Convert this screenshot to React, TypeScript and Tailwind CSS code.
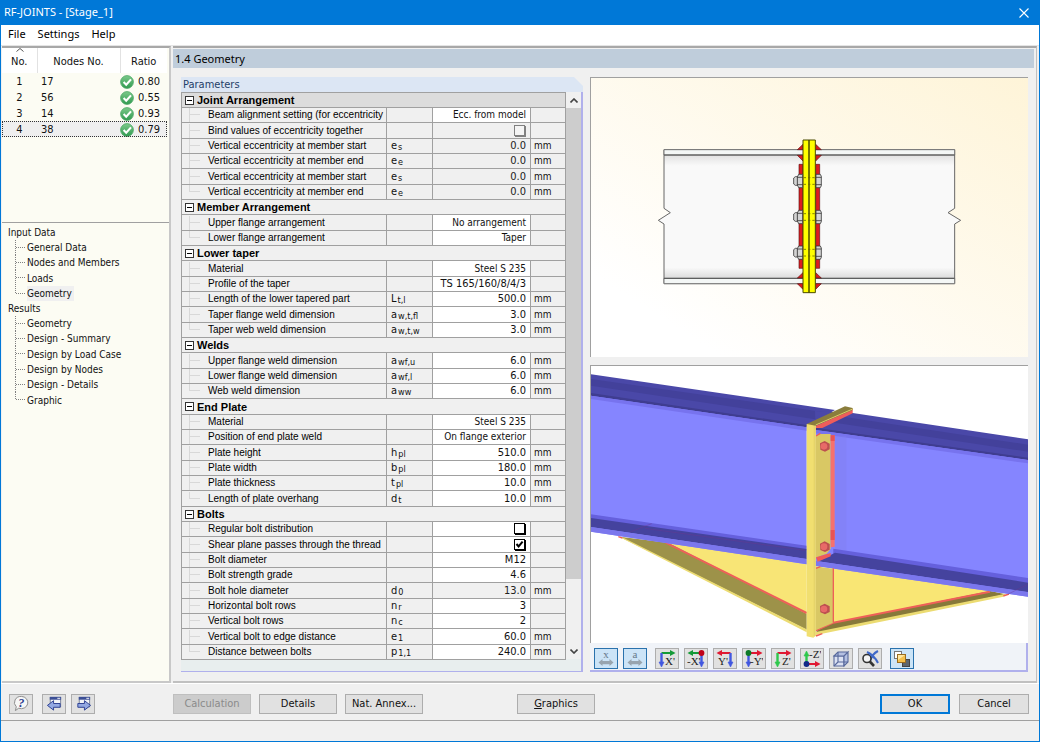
import React, { useState } from "react";

type Row = {
  label: string;
  symbol?: [string, string];
  value?: string;
  check?: boolean;
  unit?: string;
  locked?: boolean;
};
type Group = { title: string; rows: Row[] };

const groups: Group[] = [
  {
    title: "Joint Arrangement",
    rows: [
      { label: "Beam alignment setting (for eccentricity", value: "Ecc. from model" },
      { label: "Bind values of eccentricity together", check: false, locked: true },
      { label: "Vertical eccentricity at member start", symbol: ["e", "s"], value: "0.0", unit: "mm", locked: true },
      { label: "Vertical eccentricity at member end", symbol: ["e", "e"], value: "0.0", unit: "mm", locked: true },
      { label: "Vertical eccentricity at member start", symbol: ["e", "s"], value: "0.0", unit: "mm", locked: true },
      { label: "Vertical eccentricity at member end", symbol: ["e", "e"], value: "0.0", unit: "mm", locked: true },
    ],
  },
  {
    title: "Member Arrangement",
    rows: [
      { label: "Upper flange arrangement", value: "No arrangement" },
      { label: "Lower flange arrangement", value: "Taper" },
    ],
  },
  {
    title: "Lower taper",
    rows: [
      { label: "Material", value: "Steel S 235" },
      { label: "Profile of the taper", value: "TS 165/160/8/4/3" },
      { label: "Length of the lower tapered part", symbol: ["L", "t,l"], value: "500.0", unit: "mm" },
      { label: "Taper flange weld dimension", symbol: ["a", "w,t,fl"], value: "3.0", unit: "mm" },
      { label: "Taper web weld dimension", symbol: ["a", "w,t,w"], value: "3.0", unit: "mm" },
    ],
  },
  {
    title: "Welds",
    rows: [
      { label: "Upper flange weld dimension", symbol: ["a", "wf,u"], value: "6.0", unit: "mm" },
      { label: "Lower flange weld dimension", symbol: ["a", "wf,l"], value: "6.0", unit: "mm" },
      { label: "Web weld dimension", symbol: ["a", "ww"], value: "6.0", unit: "mm" },
    ],
  },
  {
    title: "End Plate",
    rows: [
      { label: "Material", value: "Steel S 235" },
      { label: "Position of end plate weld", value: "On flange exterior" },
      { label: "Plate height", symbol: ["h", "pl"], value: "510.0", unit: "mm" },
      { label: "Plate width", symbol: ["b", "pl"], value: "180.0", unit: "mm" },
      { label: "Plate thickness", symbol: ["t", "pl"], value: "10.0", unit: "mm" },
      { label: "Length of plate overhang", symbol: ["d", "t"], value: "10.0", unit: "mm" },
    ],
  },
  {
    title: "Bolts",
    rows: [
      { label: "Regular bolt distribution", check: false },
      { label: "Shear plane passes through the thread", check: true },
      { label: "Bolt diameter", value: "M12" },
      { label: "Bolt strength grade", value: "4.6" },
      { label: "Bolt hole diameter", symbol: ["d", "0"], value: "13.0", unit: "mm", locked: true },
      { label: "Horizontal bolt rows", symbol: ["n", "r"], value: "3" },
      { label: "Vertical bolt rows", symbol: ["n", "c"], value: "2" },
      { label: "Vertical bolt to edge distance", symbol: ["e", "1"], value: "60.0", unit: "mm" },
      { label: "Distance between bolts", symbol: ["p", "1,1"], value: "240.0", unit: "mm" },
    ],
  },
];

const nodes = [
  ["1", "17", "0.80"],
  ["2", "56", "0.55"],
  ["3", "14", "0.93"],
  ["4", "38", "0.79"],
];

const tree = [
  { title: "Input Data", items: ["General Data", "Nodes and Members", "Loads", "Geometry"], current: 3 },
  {
    title: "Results",
    items: ["Geometry", "Design - Summary", "Design by Load Case", "Design by Nodes", "Design - Details", "Graphic"],
    current: -1,
  },
];

function OkMark() {
  return (
    <svg viewBox="0 0 14 14" className="h-[14px] w-[14px] shrink-0" aria-hidden="true">
      <defs>
        <linearGradient id="ok" x1="0" y1="0" x2="0" y2="1">
          <stop offset="0" stopColor="#7cc98a" />
          <stop offset="1" stopColor="#2f9a50" />
        </linearGradient>
      </defs>
      <circle cx="7" cy="7" r="6.4" fill="url(#ok)" stroke="#4da866" strokeWidth="0.8" />
      <path d="M3.6 7.1 L6.2 9.7 L11 4.4" fill="none" stroke="#fff" strokeWidth="2.1" />
    </svg>
  );
}

function NodeList() {
  return (
    <div className="h-[175px] border-b border-[#a0a0a0] pr-[2px]">
      <table className="w-full table-fixed border-collapse">
        <colgroup>
          <col className="w-[35px]" />
          <col />
          <col className="w-[47px]" />
        </colgroup>
        <thead>
          <tr className="h-[25px] bg-white">
            <th className="relative border-r border-[#e2e2e2] p-0 text-center font-normal">
              <svg viewBox="0 0 8 4" className="absolute left-[14px] top-0 h-1 w-2" aria-hidden="true">
                <path d="M0.5 3.5 L4 0.5 L7.5 3.5" fill="none" stroke="#555" />
              </svg>
              <span className="block pt-[3px]">No.</span>
            </th>
            <th className="border-r border-[#e2e2e2] p-0 pt-[3px] text-center font-normal">Nodes No.</th>
            <th className="p-0 pt-[3px] text-center font-normal">Ratio</th>
          </tr>
        </thead>
        <tbody>
          {nodes.map(([no, node, ratio], i) => (
            <tr
              key={no}
              className={i === 3 ? "h-4 bg-[#efefef] outline-1 -outline-offset-1 outline-dotted outline-[#333]" : "h-4"}
            >
              <td className="p-0 pt-px text-center leading-[15px]">{no}</td>
              <td className="p-0 pl-1 pt-px leading-[15px]">{node}</td>
              <td className="p-0 pt-px leading-[15px]">
                <span className="flex items-center gap-1">
                  <OkMark />
                  {ratio}
                </span>
              </td>
            </tr>
          ))}
        </tbody>
      </table>
    </div>
  );
}

function Branch({ last, dotted }: { last: boolean; dotted?: boolean }) {
  return (
    <svg
      viewBox="0 0 12 16"
      className="h-4 w-3 shrink-0"
      fill="none"
      stroke={dotted ? "#808080" : "#d8d8d8"}
      strokeDasharray={dotted ? "1 1" : undefined}
      aria-hidden="true"
    >
      <path d={last ? "M0.5 0 V8" : "M0.5 0 V16"} />
      <path d="M1 7.5 H11" />
    </svg>
  );
}

function Navigator() {
  return (
    <nav className="flex flex-col pt-[2px] text-[10px]">
      {tree.map((section) => (
        <div key={section.title}>
          <div className="h-[15px] pl-[6px] leading-[15px]">{section.title}</div>
          <ul>
            {section.items.map((item, i) => (
              <li key={item} className="flex h-[15px] items-center overflow-hidden pl-[13px] nth-[3n]:h-4">
                <Branch dotted last={i === section.items.length - 1} />
                <a
                  href="#"
                  className={
                    i === section.current
                      ? "bg-[#f0f0f0] pr-[2px] leading-[15px]"
                      : "leading-[15px]"
                  }
                >
                  {item}
                </a>
              </li>
            ))}
          </ul>
        </div>
      ))}
    </nav>
  );
}

function Check({ label, initial, locked }: { label: string; initial: boolean; locked?: boolean }) {
  const [on, setOn] = useState(initial);
  return (
    <span className="relative ml-auto block h-3 w-3">
      <input
        type="checkbox"
        aria-label={label}
        checked={on}
        disabled={locked}
        onChange={() => setOn(!on)}
        className="block h-[11px] w-[11px] appearance-none border border-black bg-white shadow-[1px_1px_0_#000] disabled:border-[#808080] disabled:bg-[#f4f4f4] disabled:shadow-[1px_1px_0_#808080]"
      />
      {on && (
        <svg viewBox="0 0 11 11" className="pointer-events-none absolute left-0 top-0 h-[11px] w-[11px]" aria-hidden="true">
          <path d="M2.5 5 L4.6 7.5 L8.6 2.6" fill="none" stroke="#000" strokeWidth="2" />
        </svg>
      )}
    </span>
  );
}

const isNumeric = (s?: string) => !!s && /^(TS|M)?[\s\d./]+$/.test(s);

function ParameterTable() {
  let n = 0;
  return (
    <table className="w-full min-w-0 flex-1 table-fixed border-collapse border border-[#a0a0a0] bg-[#f0f0f0] leading-[14px]">
      <colgroup>
        <col />
        <col className="w-[46px]" />
        <col className="w-[98px]" />
        <col className="w-[35px]" />
      </colgroup>
      <tbody>
        {groups.map((g, gi) => {
          n += 1;
          const head = (
            <tr
              key={g.title}
              className={gi === 0 ? "h-[15px] bg-[#dcdcdc]" : n % 3 === 0 ? "h-4" : "h-[15px]"}
            >
              <th colSpan={4} className="border-b border-[#a0a0a0] p-0 text-left font-bold">
                <div className="flex h-[14px] items-center gap-[3px] pl-[3px] font-['Liberation_Sans',sans-serif] leading-[14px] text-black">
                  <button
                    type="button"
                    aria-label={"Collapse " + g.title}
                    className="flex h-[9px] w-[9px] items-center justify-center border border-[#333] bg-white"
                  >
                    <span className="block h-px w-[5px] bg-black" />
                  </button>
                  {g.title}
                </div>
              </th>
            </tr>
          );
          const rows = g.rows.map((r, i) => {
            n += 1;
            return (
              <tr key={g.title + i} className={n % 3 === 0 ? "h-4" : "h-[15px]"}>
                <td className="border-b border-[#a0a0a0] p-0">
                  <div className="flex h-[14px] items-center overflow-hidden whitespace-nowrap pl-[7px]">
                    <Branch last={i === g.rows.length - 1} />
                    <span className="pl-[7px] font-['Liberation_Sans',sans-serif] text-[10px] leading-[14px] text-black">
                      {r.label}
                    </span>
                  </div>
                </td>
                <td className="border-b border-l border-[#a0a0a0] p-0 pl-1">
                  {r.symbol && (
                    <span className="flex h-[14px] gap-px">
                      {r.symbol[0]}
                      <span className="pt-[3px] text-[9px] leading-[11px]">{r.symbol[1]}</span>
                    </span>
                  )}
                </td>
                <td
                  className={
                    r.locked
                      ? "border-b border-l border-[#a0a0a0] p-0 pr-1 text-right text-[#222]"
                      : "border-b border-l border-[#a0a0a0] bg-white p-0 pr-1 text-right"
                  }
                >
                  {r.check !== undefined ? (
                    <Check label={r.label} initial={r.check} locked={r.locked} />
                  ) : (
                    <div className={isNumeric(r.value) ? "h-[14px] whitespace-nowrap" : "h-[14px] whitespace-nowrap text-[10px]"}>
                      {r.value}
                    </div>
                  )}
                </td>
                <td className="border-b border-l border-[#a0a0a0] p-0 pl-[3px] text-[10px]">{r.unit}</td>
              </tr>
            );
          });
          return [head, ...rows];
        })}
      </tbody>
    </table>
  );
}

function Bolt({ y }: { y: number }) {
  return (
    <g stroke="#333" strokeWidth="2.4" fill="#d4d4d4">
      <path d={`M641 ${y - 9} L646 ${y - 13} H653 V${y + 13} H646 L641 ${y + 9} Z`} />
      <path d={`M656 ${y - 20} H668 V${y + 20} H656 L652 ${y + 12} V${y - 12} Z`} />
      <path d={`M708 ${y - 20} H721 L724 ${y - 14} V${y + 14} L721 ${y + 20} H708 Z`} />
      <path d={`M652 ${y - 11} H668 M652 ${y + 11} H668 M708 ${y - 11} H724 M708 ${y + 11} H724`} />
      <path d={`M671 ${y - 10} H705 M671 ${y + 10} H705`} strokeDasharray="7 6" stroke="#666600" />
    </g>
  );
}

function SideView() {
  return (
    <svg viewBox="33 -126 1311 837" className="block h-auto w-full" role="img" aria-label="Joint side view">
      <defs>
        <linearGradient id="paper" x1="0" y1="1" x2="1" y2="0">
          <stop offset="0.15" stopColor="#ffffff" />
          <stop offset="1" stopColor="#fef4d8" />
        </linearGradient>
        <linearGradient id="web" x1="0" y1="0" x2="0" y2="1">
          <stop offset="0" stopColor="#d6d6d6" />
          <stop offset="0.12" stopColor="#f9f9f9" />
          <stop offset="0.88" stopColor="#f9f9f9" />
          <stop offset="1" stopColor="#cccccc" />
        </linearGradient>
      </defs>
      <rect x="30" y="-129" width="1320" height="840" fill="url(#paper)" />
      <path
        d="M252 89 H1124 V265 L1104 278 L1142 301 L1124 312 V491 H252 V312 L235 301 L271 278 L252 265 Z"
        fill="url(#web)"
        stroke="#666"
        strokeWidth="3"
      />
      <path d="M252 89 H1124 V105 H252 Z M252 475 H1124 V491 H252 Z" fill="#f4f7f6" stroke="#777" strokeWidth="3" />
      <path d="M252 105 H1124 M252 475 H1124" stroke="#555" strokeWidth="3" />
      <g fill="#dc1c20" stroke="#5a1515" strokeWidth="2">
        <path d="M657 133 H669 V445 H657 Z M707 133 H719 V445 H707 Z" />
        <path d="M652 89 L669 73 V89 Z M652 106 L669 123 V106 Z M724 89 L707 73 V89 Z M724 106 L707 123 V106 Z" />
        <path d="M652 474 L669 458 V474 Z M652 491 L669 508 V491 Z M724 474 L707 458 V474 Z M724 491 L707 508 V491 Z" />
      </g>
      <path d="M669 60 H687 V518 H669 Z M687 60 H706 V518 H687 Z" fill="#ffff00" stroke="#4a4a00" strokeWidth="3" />
      <Bolt y={183} />
      <Bolt y={291} />
      <Bolt y={398} />
    </svg>
  );
}

function ModelView() {
  return (
    <svg viewBox="18 5 1311 831" className="block h-auto w-full" role="img" aria-label="Joint 3D view">
      <rect x="18" y="5" width="1311" height="831" fill="#fff" />
      <path d="M240 530 L665 600 V748 Z" fill="#f8e576" />
      <path d="M104 517 L250 535 L665 748 V796 Z" fill="#9d9249" />
      <path d="M102 517 L112 519 L665 795 V804 Z" fill="#ecdc72" />
      <path d="M242 535 L665 746" stroke="#ee6058" strokeWidth="6" />
      <path d="M100 517 L112 521" stroke="#ee6058" strokeWidth="4" />
      <path d="M740 605 L1240 678 L745 775 Z" fill="#f9e674" />
      <path d="M693 800 L745 775 L1215 680 L1262 690 L700 806 Z" fill="#87793a" />
      <path d="M693 803 L1262 688 L1255 697 L693 812 Z" fill="#ecdc72" />
      <path d="M693 798 L745 775 L1215 682" fill="none" stroke="#ee6058" strokeWidth="6" />
      <path d="M1255 695 L1272 689" stroke="#ee6058" strokeWidth="4" />

      <path d="M18 30 L750 137 L665 187 L18 92 Z" fill="#4a48a8" />
      <path d="M18 44 L735 146 L700 166 L18 64 Z" fill="#43419b" />
      <path d="M18 92 L665 187 V600 L18 502 Z" fill="#8585ff" />
      <path d="M18 86 L665 182 V189 L18 94 Z" fill="#3f3d90" />
      <path d="M18 94 L665 189 V199 L18 104 Z" fill="#7773ee" />
      <path d="M18 450 L665 544 V558 L18 463 Z" fill="#6560dd" />
      <path d="M18 461 L665 554 V584 L18 488 Z" fill="#45439e" />
      <path d="M18 488 L665 584 V600 L18 502 Z" fill="#7b77ed" />
      <path d="M135 503 L200 478 M180 492 L660 558" stroke="#70388c" strokeWidth="2" opacity="0.6" />

      <path d="M690 140 L803 146 L1329 225 V287 L692 196 Z" fill="#4a48a8" />
      <path d="M760 155 L1329 241 V262 L730 172 Z" fill="#43419b" />
      <path d="M692 195 L1329 285 V697 L692 605 Z" fill="#8585ff" />
      <path d="M692 190 L1329 280 V287 L692 197 Z" fill="#3f3d90" />
      <path d="M692 197 L1329 287 V297 L692 207 Z" fill="#7773ee" />
      <path d="M750 214 H784 V560 H750 Z" fill="#7f7dee" opacity="0.4" />
      <path d="M745 553 L1329 641 V660 L745 572 Z" fill="#6560dd" />
      <path d="M750 565 L1329 655 V684 L700 591 Z" fill="#45439e" />
      <path d="M692 590 L1329 683 V697 L692 605 Z" fill="#7b77ed" />
      <path d="M1268 690 L1328 660" stroke="#70388c" strokeWidth="2" opacity="0.6" />

      <path d="M692 214 L705 209 H737 V553 L725 568 L692 580 Z" fill="#d9c864" />
      <path d="M692 606 L745 613 V775 L692 798 Z" fill="#d9c864" />
      <path d="M737 213 H749 V547 L737 549 Z" fill="#f6716d" />
      <path d="M737 213 H749 V230 H737 Z M737 497 H749 V527 H737 Z" fill="#e85353" />
      <path d="M745 612 V775" stroke="#ee6058" strokeWidth="4" />
      <path d="M693 579 L737 566 V576 L698 592 Z" fill="#f05a58" />
      <path d="M693 215 L706 207 M693 612 L706 607 M693 815 L712 808" stroke="#ee6058" strokeWidth="4" />
      <path d="M665 179 H692 V815 L685 820 L665 816 Z" fill="#f1df70" />
      <path d="M686 181 H692 V815 H686 Z" fill="#e6d469" />
      <path d="M693 184 L803 134 V147 L712 191 H693 Z" fill="#ee5d5b" />
      <path d="M665 179 L780 126 L803 131 V137 L692 184 Z" fill="#8a7d3c" />
      <path d="M692 182 L803 134" stroke="#dccb65" strokeWidth="3" />
      {[246, 547, 734].map((y) => (
        <g key={y}>
          <path d={`M705 ${y - 9} L719 ${y - 16} L734 ${y - 8} V${y + 9} L720 ${y + 16} L706 ${y + 10} Z`} fill="#bd4f50" />
          <circle cx="717" cy={y} r="10" fill="#e86a68" />
        </g>
      ))}
    </svg>
  );
}

function AxisIcon({ label, h, v, left, down, up, labelX, labelY, dot }: {
  label: string; h: string; v: string; left?: boolean; down: boolean; up?: boolean; labelX: number; labelY: number; dot?: string;
}) {
  const vx = left ? 14.5 : 3.5;
  const base = up ? 14 : 3;
  return (
    <svg viewBox="0 0 18 18" className="h-[18px] w-[18px]" aria-hidden="true">
      <path d={left ? `M14.5 ${base} H5` : `M3.5 ${base} H13`} stroke={h} strokeWidth="2" />
      <path d={left ? `M6 ${base - 3} L0.5 ${base} L6 ${base + 3} Z` : `M12 ${base - 3} L17.5 ${base} L12 ${base + 3} Z`} fill={h} />
      {down && (
        <g fill={v} stroke={v}>
          <path d={`M${vx} 3 V13`} strokeWidth="2.4" />
          <path d={`M${vx - 2.5} 12 L${vx} 17 L${vx + 2.5} 12 Z`} strokeWidth="0.6" />
        </g>
      )}
      {up && (
        <g fill={v} stroke={v}>
          <path d={`M${vx} 14 V5`} strokeWidth="2.4" />
          <path d={`M${vx - 2.5} 6 L${vx} 1 L${vx + 2.5} 6 Z`} strokeWidth="0.6" />
        </g>
      )}
      {dot && <circle cx={vx} cy={base} r="2.9" fill={dot} />}
      <text x={labelX} y={labelY} fontFamily="Liberation Serif, serif" fontSize="11" fill="#222">
        {label}
      </text>
    </svg>
  );
}

function DimIcon({ letter }: { letter: string }) {
  return (
    <svg viewBox="0 0 18 18" className="h-[18px] w-[18px]" aria-hidden="true">
      <text x="9" y="8" textAnchor="middle" fontFamily="Liberation Serif, serif" fontSize="11" fill="#66788a">
        {letter}
      </text>
      <path d="M1.5 12.5 L5.5 9 V11 H12.5 V9 L16.5 12.5 L12.5 16 V14.2 H5.5 V16 Z" fill="#98a4ae" />
    </svg>
  );
}

const G = "#159a38";
const R = "#e01832";
const B = "#4258e0";

const toolGroups: { name: string; on?: boolean; icon: React.ReactNode }[][] = [
  [
    { name: "Show dimensions", on: true, icon: <DimIcon letter="x" /> },
    { name: "Show weld sizes", on: true, icon: <DimIcon letter="a" /> },
  ],
  [
    { name: "View in X", icon: <AxisIcon label="X'" h={G} v={B} down labelX={7} labelY={15} /> },
    { name: "View against X", icon: <AxisIcon label="-X'" h={G} v={B} left down labelX={0} labelY={15} dot="#c00018" /> },
    { name: "View in Y", icon: <AxisIcon label="Y'" h={R} v={B} left down labelX={2} labelY={15} /> },
    { name: "View against Y", icon: <AxisIcon label="-Y'" h={R} v={B} down labelX={5} labelY={15} dot="#0c7a28" /> },
    { name: "View in Z", icon: <AxisIcon label="Z'" h={R} v="#2ec84c" down labelX={8} labelY={15} /> },
    { name: "View against Z", icon: <AxisIcon label="-Z'" h={R} v="#2ec84c" down={false} up labelX={6} labelY={8} dot="#102a88" /> },
    {
      name: "Isometric view",
      icon: (
        <svg viewBox="0 0 18 18" className="h-[18px] w-[18px]" fill="none" stroke="#58699c" strokeWidth="1.1" aria-hidden="true">
          <path d="M2 6 H12 V16 H2 Z" fill="#dbe1f2" />
          <path d="M2 6 L6 2 H16 L12 6 Z M12 6 L16 2 V12 L12 16 Z" fill="#b4c0e2" />
          <path d="M6 2 V12 H16 M6 12 L2 16" />
        </svg>
      ),
    },
    {
      name: "Zoom all",
      icon: (
        <svg viewBox="0 0 18 18" className="h-[18px] w-[18px]" fill="none" aria-hidden="true">
          <path d="M6 2 Q13 5 17 13 M17 1 Q11 4 9 11" stroke="#3f68c8" strokeWidth="2" />
          <circle cx="6" cy="8.5" r="4" fill="#f4f4f4" stroke="#333" strokeWidth="1.6" />
          <path d="M8.8 11.5 L13 16" stroke="#333" strokeWidth="2.6" />
          <path d="M8 3 L13 8" stroke="#3f68c8" strokeWidth="2" />
        </svg>
      ),
    },
  ],
  [
    {
      name: "Display layers",
      on: true,
      icon: (
        <svg viewBox="0 0 18 18" className="h-[18px] w-[18px]" aria-hidden="true">
          <rect x="9.5" y="9.5" width="7" height="7" fill="#5d6670" stroke="#444" />
          <rect x="1.5" y="1.5" width="7" height="7" fill="#fff" stroke="#777" />
          <rect x="4.5" y="4.5" width="8" height="8" fill="#f4c04c" stroke="#996c20" />
          <path d="M5 5 H12 L5 10 Z" fill="#ffe7a0" />
        </svg>
      ),
    },
  ],
];

function Toolbar() {
  return (
    <div className="flex h-[29px] items-center gap-2 border-b-2 border-r-2 border-[#b0b0ec] bg-[#f0f3f8] pl-1 pt-1">
      {toolGroups.map((group, i) => (
        <div key={i} className="flex gap-[5px]">
          {group.map((t) => (
            <button
              key={t.name}
              type="button"
              aria-label={t.name}
              className={
                t.on
                  ? "flex h-[21px] w-6 items-center justify-center border border-[#2a72ad] bg-[#cce4f7]"
                  : "flex h-[21px] w-6 items-center justify-center border border-[#adadad] bg-[#e1e1e1]"
              }
            >
              {t.icon}
            </button>
          ))}
        </div>
      ))}
    </div>
  );
}

function PageArrow({ forward }: { forward?: boolean }) {
  return (
    <svg viewBox="0 0 18 18" className="h-[17px] w-[17px]" aria-hidden="true">
      <rect x="4.5" y="2.5" width="11" height="10" fill="#f2f4f8" stroke="#77809a" />
      <path d="M4 2 H16 V5 H4 Z" fill="#3c4f96" />
      <path d="M12 3.5 H15" stroke="#fff" />
      <path
        d={forward ? "M3 9 H10 V6 L16.5 11 L10 16 V13 H3 Z" : "M15 9 H8 V6 L1.5 11 L8 16 V13 H15 Z"}
        fill="#93a8e2"
        stroke="#2c3f92"
      />
    </svg>
  );
}

const pushButton = "h-5 border border-[#adadad] bg-[#e1e1e1] text-center leading-[18px]";

export default function App() {
  return (
    <div className="flex min-h-screen flex-col border-x border-b border-[#0078d7] bg-[#f0f0f0] font-['DejaVu_Sans_Condensed','DejaVu_Sans',sans-serif] text-[11px] text-[#111]">
      <header className="flex h-[25px] items-center justify-between bg-[#0078d7] pl-[3px] pr-[10px] font-['Noto_Sans',sans-serif] text-[11px] text-white">
        <h1>RF-JOINTS - [Stage_1]</h1>
        <button type="button" aria-label="Close">
          <svg viewBox="0 0 10 10" className="h-[10px] w-[10px]" aria-hidden="true">
            <path d="M0.5 0.5 L9.5 9.5 M9.5 0.5 L0.5 9.5" stroke="#fff" strokeWidth="1.1" />
          </svg>
        </button>
      </header>
      <nav className="flex h-[21px] items-center gap-3 border-b border-[#e4e4e4] bg-white pb-px pl-[7px] font-['Noto_Sans',sans-serif] text-[11px] text-black">
        <button type="button">File</button>
        <button type="button">Settings</button>
        <button type="button">Help</button>
      </nav>

      <div className="flex flex-1 gap-[2px] pl-px pr-[2px]">
        <aside className="w-[169px] shrink-0 border-b-2 border-r-2 border-t-2 border-[#a8a8a8] border-b-[#c8c8c8] border-r-[#c8c8c8] bg-[#fcfcf3]">
          <NodeList />
          <Navigator />
        </aside>

        <main className="min-w-0 flex-1 border-b-2 border-r border-t-2 border-[#c0c0c0] border-t-[#a8a8a8] pb-2 pr-[2px] pt-px">
          <h2 className="h-[19px] bg-[#bfcddb] pl-[2px] font-['Noto_Sans',sans-serif] text-[11px] leading-[19px] text-black">
            1.4 Geometry
          </h2>
          <div className="flex gap-[7px] pl-2 pr-[6px] pt-[9px]">
            <section className="flex w-[402px] shrink-0 flex-col">
              <h3 className="h-[15px] bg-[#dce6f4] pl-[2px] leading-[15px] text-[#1f4068] [clip-path:polygon(0_0,calc(100%-9px)_0,100%_9px,100%_100%,0_100%)]">
                Parameters
              </h3>
              <div className="flex flex-1 items-start border-b border-r-2 border-[#b0b0ec] bg-[#e8eeee]">
                <ParameterTable />
                <div className="flex w-[15px] shrink-0 flex-col items-center self-start bg-[#cdcdcd]" aria-hidden="true">
                  <div className="flex h-4 w-full items-center justify-center bg-[#f0f0f0]">
                    <svg viewBox="0 0 8 5" className="h-[5px] w-2">
                      <path d="M0.5 4.5 L4 1 L7.5 4.5" fill="none" stroke="#444" strokeWidth="1.6" />
                    </svg>
                  </div>
                  <div className="mt-[471px] flex h-20 w-full items-end justify-center bg-[#f0f0f0] pb-[5px]">
                    <svg viewBox="0 0 8 5" className="h-[5px] w-2">
                      <path d="M0.5 0.5 L4 4 L7.5 0.5" fill="none" stroke="#444" strokeWidth="1.6" />
                    </svg>
                  </div>
                </div>
              </div>
            </section>
            <section className="flex min-w-0 flex-1 flex-col">
              <div className="border-l border-t border-[#a0a0a0]">
                <SideView />
              </div>
              <div className="mt-2 border-l border-t border-[#a0a0a0]">
                <ModelView />
              </div>
              <Toolbar />
            </section>
          </div>
        </main>
      </div>

      <footer>
        <div className="flex h-[37px] items-center border-t border-white pl-2 pr-[10px] pt-[3px]">
          <button type="button" aria-label="Help" className="mr-[9px] flex h-5 w-6 items-center justify-center border border-[#adadad] bg-[#e1e1e1]">
            <svg viewBox="0 0 18 18" className="h-[17px] w-[17px]" aria-hidden="true">
              <path d="M9 1.5 A7 6.5 0 1 1 6 14 L2.5 16.5 L3.5 12.5 A7 6.5 0 0 1 9 1.5 Z" fill="#f6f6f6" stroke="#888" />
              <text x="5.5" y="13" fontFamily="Liberation Serif, serif" fontSize="13" fontWeight="bold" fontStyle="italic" fill="#28398c">
                ?
              </text>
            </svg>
          </button>
          <button type="button" aria-label="Previous page" className="mr-[5px] flex h-5 w-6 items-center justify-center border border-[#adadad] bg-[#e1e1e1]">
            <PageArrow />
          </button>
          <button type="button" aria-label="Next page" className="flex h-5 w-6 items-center justify-center border border-[#adadad] bg-[#e1e1e1]">
            <PageArrow forward />
          </button>
          <div className="ml-[78px] flex gap-2">
            <button type="button" disabled className="h-5 w-[78px] border border-[#bfbfbf] bg-[#cccccc] leading-[18px] text-[#8a8a8a]">
              Calculation
            </button>
            <button type="button" className={pushButton + " w-[78px]"}>Details</button>
            <button type="button" className={pushButton + " w-[78px]"}>Nat. Annex...</button>
          </div>
          <button type="button" className={pushButton + " ml-[94px] w-[78px]"}>
            <span className="underline">G</span>raphics
          </button>
          <div className="ml-auto flex gap-[9px]">
            <button type="button" className="h-5 w-[70px] border-2 border-[#0078d7] bg-[#e1e1e1] leading-4">OK</button>
            <button type="button" className={pushButton + " w-[70px]"}>Cancel</button>
          </div>
        </div>
        <div className="h-[21px] border-t border-[#a0a0a0]" />
      </footer>
    </div>
  );
}
